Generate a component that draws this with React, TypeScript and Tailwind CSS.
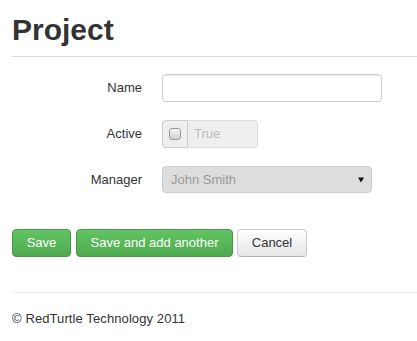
const font = { fontFamily: '"Liberation Sans", Arial, sans-serif' };

function Row({ label, children }: { label: string; children: React.ReactNode }) {
  return (
    <div className="flex items-center">
      <label className="w-[130px] text-right text-[13px] leading-[18px] text-[#333]">{label}</label>
      <div className="ml-5">{children}</div>
    </div>
  );
}

export default function App() {
  return (
    <div className="min-h-[341px] bg-white pl-3 text-[#333]" style={font}>
      <h1 className="pt-3 text-[30px] font-bold leading-[36px] text-[#333]">Project</h1>
      <div className="mt-2 border-t border-[#dcdcdc]" />

      <form className="mt-[17px] flex flex-col gap-[18px]">
        <Row label="Name">
          <input
            type="text"
            className="block h-[28px] w-[220px] rounded-[4px] border border-[#ccc] bg-white px-[6px] text-[13px] shadow-[inset_0_1px_1px_rgba(0,0,0,0.075)] outline-none"
          />
        </Row>

        <Row label="Active">
          <div className="flex h-[28px]">
            <span className="flex w-[26px] items-center justify-center rounded-l-[4px] border border-[#ccc] bg-[#eee]">
              <span className="block h-[12px] w-[12px] rounded-[3px] border border-[#999] bg-gradient-to-b from-[#f5f5f5] to-[#cfcfcf]" />
            </span>
            <span className="flex w-[70px] items-center rounded-r-[4px] border border-l-0 border-[#ddd] bg-[#eee] pl-[6px] text-[13px] text-[#bbb]">
              True
            </span>
          </div>
        </Row>

        <Row label="Manager">
          <div className="flex h-[27px] w-[210px] items-center justify-between rounded-[4px] border border-[#ccc] bg-[#ddd] pl-[8px] pr-[7px] text-[13px] text-[#999]">
            <span>John Smith</span>
            <svg width="6" height="6" viewBox="0 0 6 6">
              <polygon points="0,0.5 6,0.5 3,5.5" fill="#111" />
            </svg>
          </div>
        </Row>
      </form>

      <div className="mt-[36px] flex">
        <button className="h-[28px] w-[59px] rounded-[4px] border border-[#479847] bg-gradient-to-b from-[#62c462] to-[#4fa94f] text-[13px] text-white">
          Save
        </button>
        <button className="ml-[5px] h-[28px] w-[157px] rounded-[4px] border border-[#479847] bg-gradient-to-b from-[#62c462] to-[#4fa94f] text-[13px] text-white">
          Save and add another
        </button>
        <button className="ml-1 h-[28px] w-[70px] rounded-[4px] border border-[#ccc] border-b-[#b3b3b3] bg-gradient-to-b from-white to-[#e6e6e6] text-[13px] text-[#333]">
          Cancel
        </button>
      </div>

      <div className="mt-[35px] border-t border-[#eee]" />
      <p className="mt-[17px] text-[13px] leading-[18px] tracking-[0.1px] text-[#333]">© RedTurtle Technology 2011</p>
    </div>
  );
}
